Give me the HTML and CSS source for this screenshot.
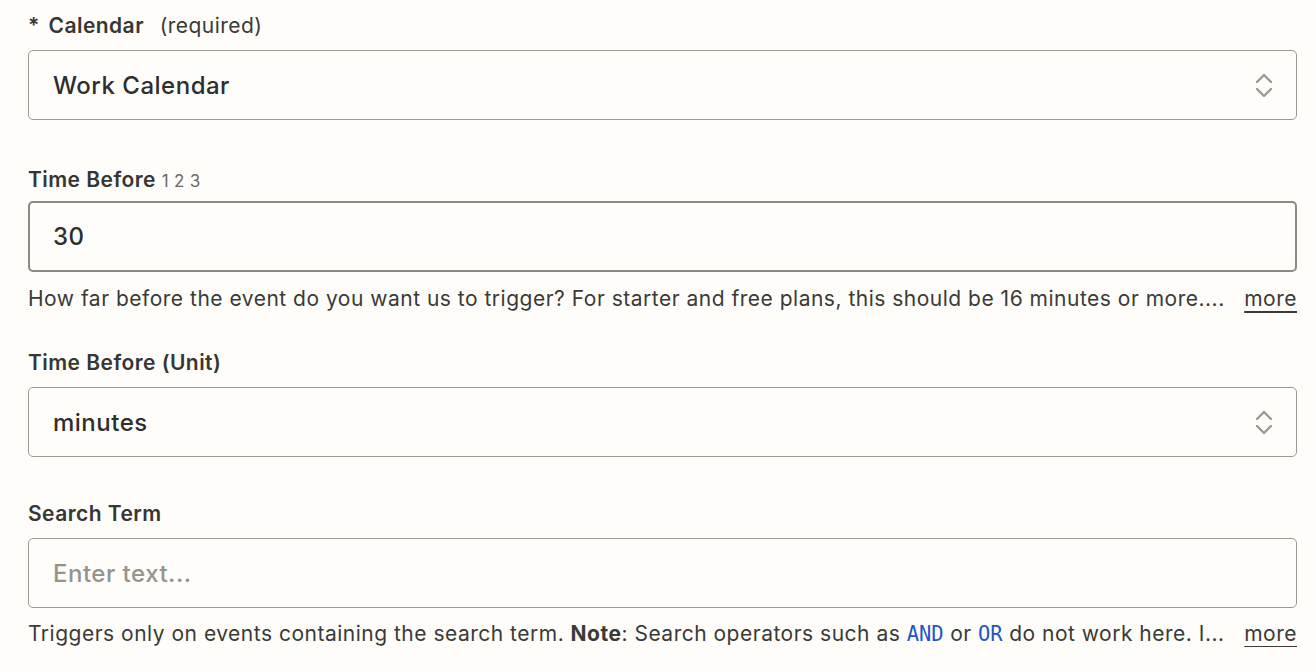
FILE: index.html
```html
<!DOCTYPE html>
<html>
<head>
<meta charset="utf-8">
<link rel="stylesheet" href="styles.css">
</head>
<body>
<div class="form">
  <div class="field f-cal">
    <label class="label"><span class="req">*</span> Calendar <span class="muted">(required)</span></label>
    <div class="box select">
      <span class="value">Work Calendar</span>
      <svg class="chev" width="18" height="27" viewBox="0 0 18 27"><path d="M2 10 L9 3 L16 10 M2 17 L9 24 L16 17" fill="none" stroke="#9a9893" stroke-width="2.3" stroke-linecap="round" stroke-linejoin="round"/></svg>
    </div>
  </div>
  <div class="field f-time">
    <label class="label">Time Before <span class="nums">1 2 3</span></label>
    <div class="box focus"><span class="value">30</span></div>
    <div class="help"><span class="htext">How far before the event do you want us to trigger? For starter and free plans, this should be 16 minutes or more....</span><a class="more">more</a></div>
  </div>
  <div class="field f-unit">
    <label class="label">Time Before (Unit)</label>
    <div class="box select">
      <span class="value">minutes</span>
      <svg class="chev" width="18" height="27" viewBox="0 0 18 27"><path d="M2 10 L9 3 L16 10 M2 17 L9 24 L16 17" fill="none" stroke="#9a9893" stroke-width="2.3" stroke-linecap="round" stroke-linejoin="round"/></svg>
    </div>
  </div>
  <div class="field f-search">
    <label class="label">Search Term</label>
    <div class="box"><span class="value placeholder">Enter text...</span></div>
    <div class="help"><span class="htext">Triggers only on events containing the search term. <b>Note</b>: Search operators such as <code>AND</code> or <code>OR</code> do not work here. I...</span><a class="more">more</a></div>
  </div>
</div>
</body>
</html>
```
FILE: styles.css
```css
html, body {
  margin: 0;
  padding: 0;
  background: #fffdf9;
}
body {
  font-family: Inter, "Noto Sans", sans-serif;
  color: #2d2e2e;
}
* {
  box-sizing: border-box;
}
.form {
  padding: 13px 19px 0 28px;
  display: flex;
  flex-direction: column;
}
.field {
  display: flex;
  flex-direction: column;
}
.label {
  font-size: 21px;
  font-weight: 600;
  letter-spacing: 0.45px;
  line-height: 26px;
  color: #363634;
  height: 26px;
}
.req {
  margin-right: 3px;
}
.muted {
  font-weight: 400;
  margin-left: 10px;
  color: #3a3a38;
}
.nums {
  font-weight: 400;
  font-size: 17px;
  letter-spacing: 0.3px;
  color: #6b6a66;
}
.box {
  height: 70px;
  border: 1px solid #9b9994;
  border-radius: 5px;
  display: flex;
  align-items: center;
  padding: 0 23px 0 24px;
  justify-content: space-between;
}
.box.focus {
  height: 71px;
  border: 2px solid #8c8a85;
  padding-left: 23px;
}
.value {
  font-size: 24px;
  font-weight: 500;
  letter-spacing: 0.5px;
  color: #2d2e2e;
}
.placeholder {
  color: #95938e;
}
.chev {
  display: block;
}
.help {
  display: flex;
  justify-content: space-between;
  align-items: baseline;
  font-size: 21px;
  letter-spacing: 0.5px;
  line-height: 26px;
  color: #3a3a38;
}
.help b {
  font-weight: 700;
}
.help code {
  font-family: "DejaVu Sans Mono", "Liberation Mono", monospace;
  font-size: 20.5px;
  letter-spacing: 0;
  color: #2457c5;
}
.more {
  text-decoration: underline;
  text-decoration-thickness: 2px;
  text-underline-offset: 5px;
  color: #3a3a38;
}
.f-cal .box { margin-top: 11px; }
.f-time { margin-top: 47px; }
.f-time .box { margin-top: 8px; }
.f-time .help { margin-top: 14px; }
.f-unit { margin-top: 38px; }
.f-unit .box { margin-top: 11px; }
.f-search { margin-top: 44px; }
.f-search .box { margin-top: 11px; }
.f-search .help { margin-top: 13px; }
```
